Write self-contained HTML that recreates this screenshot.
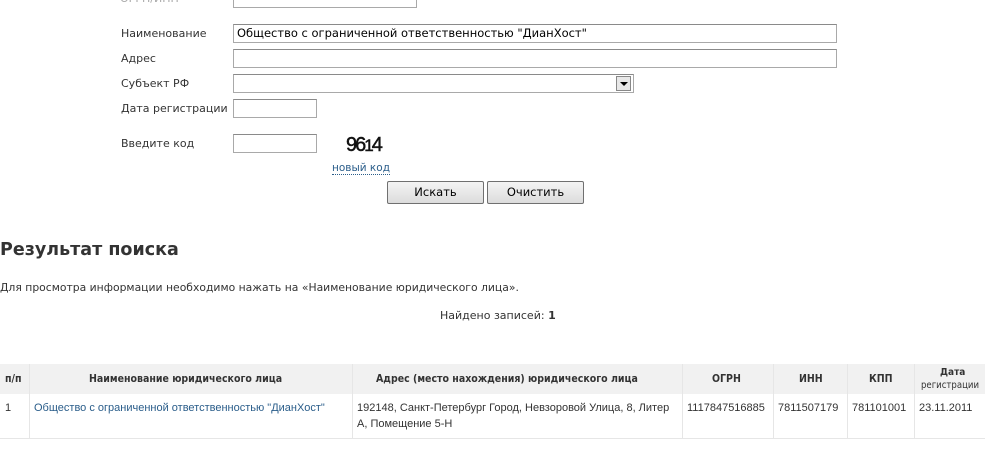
<!DOCTYPE html>
<html><head><meta charset="utf-8"><style>
body{margin:0;width:985px;height:456px;overflow:hidden;background:#fff;font-family:"DejaVu Sans","Liberation Sans",sans-serif;color:#333;position:relative}
.a{position:absolute;white-space:nowrap}
.l{font-size:11px;color:#333}
.in{position:absolute;border:1px solid #a9a9a9;border-top-color:#8a8a8a;background:#fff;box-sizing:border-box;font-size:11.5px;padding:2px 3px;color:#000;font-family:"DejaVu Sans",sans-serif}
.btn{position:absolute;top:181px;width:97px;height:23px;border:1px solid #707070;border-radius:2px;background:linear-gradient(#f4f4f4,#dcdcdc);box-sizing:border-box;font-size:11.5px;text-align:center;line-height:21px;color:#000}
.t{font-size:11px;font-family:"Liberation Sans",sans-serif}
.th{font-weight:bold;color:#333;font-size:10.5px;font-family:"DejaVu Sans Condensed","DejaVu Sans",sans-serif}
.vl{position:absolute;top:364px;height:74px;width:1px;background:#e6e6e6}
</style></head><body>
<div class="a l" style="left:120px;top:-8px;color:#aaa">ОГРН/ИНН</div>
<div class="in" style="left:233px;top:-12px;width:184px;height:20px"></div>
<div class="a l" style="left:121px;top:27px">Наименование</div>
<div class="in" style="left:233px;top:24px;width:604px;height:19px;padding-top:1px">Общество с ограниченной ответственностью "ДианХост"</div>
<div class="a l" style="left:121px;top:52px">Адрес</div>
<div class="in" style="left:233px;top:49px;width:604px;height:19px"></div>
<div class="a l" style="left:121px;top:77px">Субъект РФ</div>
<div class="in" style="left:233px;top:74px;width:401px;height:19px"></div>
<div style="position:absolute;left:616px;top:76px;width:15px;height:15px;border:1px solid #888;box-sizing:border-box;background:#e8e8e8"><div style="position:absolute;left:3px;top:5px;border-left:4px solid transparent;border-right:4px solid transparent;border-top:4px solid #000"></div></div>
<div class="a l" style="left:121px;top:102px">Дата регистрации</div>
<div class="in" style="left:233px;top:99px;width:84px;height:19px"></div>
<div class="a l" style="left:121px;top:137px">Введите код</div>
<div class="in" style="left:233px;top:134px;width:84px;height:19px"></div>
<div class="a" style="left:346px;top:134px;font-size:20px;letter-spacing:-2px;font-family:'Liberation Sans',sans-serif;color:#111;-webkit-text-stroke:0.5px #111">96<span style="font-size:17px">1</span>4</div>
<div class="a" style="left:332px;top:162px;font-size:10.5px;color:#2a5d8a;border-bottom:1px dotted #2a5d8a;line-height:12px">новый код</div>
<div class="btn" style="left:387px">Искать</div>
<div class="btn" style="left:487px">Очистить</div>
<div class="a" style="left:0;top:240px;font-size:17.5px;font-weight:bold;color:#333">Результат поиска</div>
<div class="a" style="left:0;top:281px;font-size:10.8px">Для просмотра информации необходимо нажать на «Наименование юридического лица».</div>
<div class="a" style="left:440px;top:309px;font-size:11px">Найдено записей: <b>1</b></div>
<div style="position:absolute;left:0;top:364px;width:985px;height:30px;background:#f1f1f1"></div>
<div style="position:absolute;left:0;top:438px;width:985px;height:1px;background:#e6e6e6"></div>
<div class="vl" style="left:29px"></div><div class="vl" style="left:352px"></div><div class="vl" style="left:682px"></div><div class="vl" style="left:773px"></div><div class="vl" style="left:847px"></div><div class="vl" style="left:914px"></div>
<div class="a th" style="left:5px;top:373px">п/п</div>
<div class="a th" style="left:89px;top:373px">Наименование юридического лица</div>
<div class="a th" style="left:376px;top:373px">Адрес (место нахождения) юридического лица</div>
<div class="a th" style="left:712px;top:373px">ОГРН</div>
<div class="a th" style="left:799px;top:373px">ИНН</div>
<div class="a th" style="left:869px;top:373px">КПП</div>
<div class="a th" style="left:940px;top:367px;font-size:10px">Дата</div>
<div class="a th" style="left:921px;top:380px;font-size:9.5px;font-weight:normal">регистрации</div>
<div class="a t" style="left:5px;top:402px">1</div>
<div class="a t" style="left:34px;top:402px;color:#2a5d8a">Общество с ограниченной ответственностью "ДианХост"</div>
<div class="a t" style="left:357px;top:402px">192148, Санкт-Петербург Город, Невзоровой Улица, 8, Литер</div>
<div class="a t" style="left:357px;top:418px">А, Помещение 5-Н</div>
<div class="a t" style="left:687px;top:402px">1117847516885</div>
<div class="a t" style="left:778px;top:402px">7811507179</div>
<div class="a t" style="left:852px;top:402px">781101001</div>
<div class="a t" style="left:919px;top:402px">23.11.2011</div>
</body></html>
